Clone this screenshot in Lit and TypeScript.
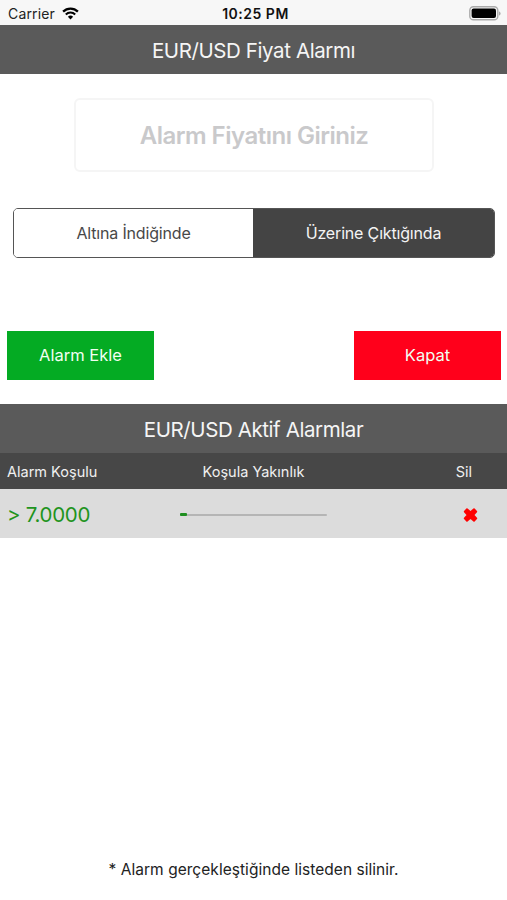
import { LitElement, html, css } from "lit";
import { customElement, state } from "lit/decorators.js";
import { classMap } from "lit/directives/class-map.js";

interface PriceAlarm {
  condition: string;
  proximity: number;
}

@customElement("status-bar")
class StatusBar extends LitElement {
  static styles = css`
    :host {
      display: grid;
      grid-template-columns: 1fr auto 1fr;
      align-items: center;
      height: 25px;
      padding: 2px 6px 0 8px;
      box-sizing: border-box;
      background: #f7f7f7;
      color: #111;
      font-size: 14px;
    }
    .carrier {
      display: flex;
      align-items: center;
      gap: 7px;
      color: #222;
      letter-spacing: 0.15px;
    }
    .time {
      font-weight: 600;
      letter-spacing: 0.5px;
      padding-left: 2px;
    }
    .battery {
      justify-self: end;
      display: block;
    }
  `;

  render() {
    return html`
      <div class="carrier">
        <span>Carrier</span>
        <svg width="17" height="13" viewBox="0 0 17 13">
          <path d="M1.1 4.6a10.6 10.6 0 0 1 14.8 0" fill="none" stroke="#000" stroke-width="2.3" />
          <path d="M3.8 7.5a6.7 6.7 0 0 1 9.4 0" fill="none" stroke="#000" stroke-width="2.1" />
          <path d="M8.5 12.4 5.9 9.8a3.8 3.8 0 0 1 5.2 0z" />
        </svg>
      </div>
      <span class="time">10:25 PM</span>
      <svg class="battery" width="32" height="15" viewBox="0 0 32 15">
        <rect x="0.8" y="0.8" width="28" height="13" rx="3.6" fill="#f7f7f7" stroke="#aaa" stroke-width="1.4" />
        <rect x="2.6" y="2.6" width="24.4" height="9.4" rx="2" />
        <path d="M30.2 5.4c1.7.5 1.7 3.6 0 4.1z" fill="#999" />
      </svg>
    `;
  }
}

@customElement("alarm-row")
class AlarmRow extends LitElement {
  static properties = { alarm: { attribute: false } };
  declare alarm: PriceAlarm;

  static styles = css`
    :host {
      display: grid;
      grid-template-columns: 180px 147px 1fr;
      align-items: center;
      height: 49px;
      padding: 2px 29px 0 0;
      box-sizing: border-box;
      background: #dcdcdc;
    }
    .condition {
      padding-left: 7px;
      font-size: 20.5px;
      letter-spacing: -0.3px;
      color: #1f9420;
    }
    .track {
      display: flex;
      align-items: center;
      height: 2px;
      border-radius: 1px;
      background: #b5b5b5;
    }
    .fill {
      height: 3px;
      border-radius: 1px;
      background: #1f8f20;
    }
    .remove {
      justify-self: end;
      display: block;
    }
  `;

  render() {
    return html`
      <span class="condition">${this.alarm.condition}</span>
      <div class="track">
        <div class="fill" style="width: ${this.alarm.proximity}%"></div>
      </div>
      <svg class="remove" width="15" height="14" viewBox="0 0 15 14">
        <path
          d="M4 1.2 7.5 4.2 11 1.2 13.3 3.6 10.4 7 13.3 10.4 11 12.8 7.5 9.8 4 12.8 1.7 10.4 4.6 7 1.7 3.6z"
          fill="#f00"
          stroke="#f00"
          stroke-width="1.8"
          stroke-linejoin="round"
        />
      </svg>
    `;
  }
}

@customElement("app-root")
class AppRoot extends LitElement {
  @state() private above = true;
  @state() private alarms: PriceAlarm[] = [{ condition: "> 7.0000", proximity: 5 }];

  static styles = css`
    :host {
      display: flex;
      flex-direction: column;
      height: 900px;
      overflow: hidden;
      background: #fff;
      font-family: Inter, "Liberation Sans", sans-serif;
    }
    button,
    input {
      font-family: inherit;
      margin: 0;
      padding: 0;
      border: 0;
      box-sizing: border-box;
    }
    .title {
      display: flex;
      align-items: center;
      justify-content: center;
      height: 49px;
      padding-top: 1px;
      box-sizing: border-box;
      background: #5a5a5a;
      color: #f5f5f5;
      font-size: 20.5px;
      letter-spacing: -0.4px;
    }
    .price {
      width: 360px;
      height: 74px;
      margin: 24px 0 0 74px;
      border: 2px solid #f5f5f5;
      border-radius: 6px;
      text-align: center;
      font-size: 24px;
      font-weight: 600;
      letter-spacing: -0.5px;
      outline: none;
      background: #fff;
    }
    .price::placeholder {
      color: #c9c9cb;
      opacity: 1;
    }
    .segments {
      display: grid;
      grid-template-columns: 239px 1fr;
      height: 50px;
      margin: 36px 12px 0 13px;
      box-sizing: border-box;
      border: 1px solid #555;
      border-radius: 5px;
      overflow: hidden;
    }
    .segment {
      background: #fff;
      color: #484848;
      font-size: 16px;
      letter-spacing: -0.17px;
    }
    .segment.active {
      background: #444;
      color: #f4f4f4;
    }
    .actions {
      display: flex;
      justify-content: space-between;
      margin: 73px 6px 24px 7px;
    }
    .action {
      width: 147px;
      height: 49px;
      padding-bottom: 1px;
      color: #f2fff2;
      font-size: 16.5px;
    }
    .add {
      background: #04ab23;
    }
    .close {
      background: #ff001b;
    }
    .columns {
      display: grid;
      grid-template-columns: 180px 147px 1fr;
      align-items: center;
      height: 36px;
      background: #474747;
      color: #f0f0f0;
      font-size: 14.5px;
    }
    .first {
      padding-left: 7px;
    }
    .middle {
      text-align: center;
    }
    .last {
      justify-self: end;
      padding-right: 35px;
    }
    .note {
      margin: auto 0 21px;
      text-align: center;
      font-size: 15.5px;
      letter-spacing: 0.04px;
      line-height: 18px;
      color: #222;
    }
  `;

  render() {
    return html`
      <status-bar></status-bar>
      <div class="title"><span class="heading">EUR/USD Fiyat Alarmı</span></div>
      <input class="price" placeholder="Alarm Fiyatını Giriniz" />
      <div class="segments">
        <button class=${classMap({ segment: true, active: !this.above })} @click=${() => (this.above = false)}>
          Altına İndiğinde
        </button>
        <button class=${classMap({ segment: true, active: this.above })} @click=${() => (this.above = true)}>
          Üzerine Çıktığında
        </button>
      </div>
      <div class="actions">
        <button class="action add">Alarm Ekle</button>
        <button class="action close">Kapat</button>
      </div>
      <div class="title"><span class="heading">EUR/USD Aktif Alarmlar</span></div>
      <div class="columns">
        <span class="first">Alarm Koşulu</span>
        <span class="middle">Koşula Yakınlık</span>
        <span class="last">Sil</span>
      </div>
      ${this.alarms.map((alarm) => html`<alarm-row .alarm=${alarm}></alarm-row>`)}
      <div class="note">* Alarm gerçekleştiğinde listeden silinir.</div>
    `;
  }
}
